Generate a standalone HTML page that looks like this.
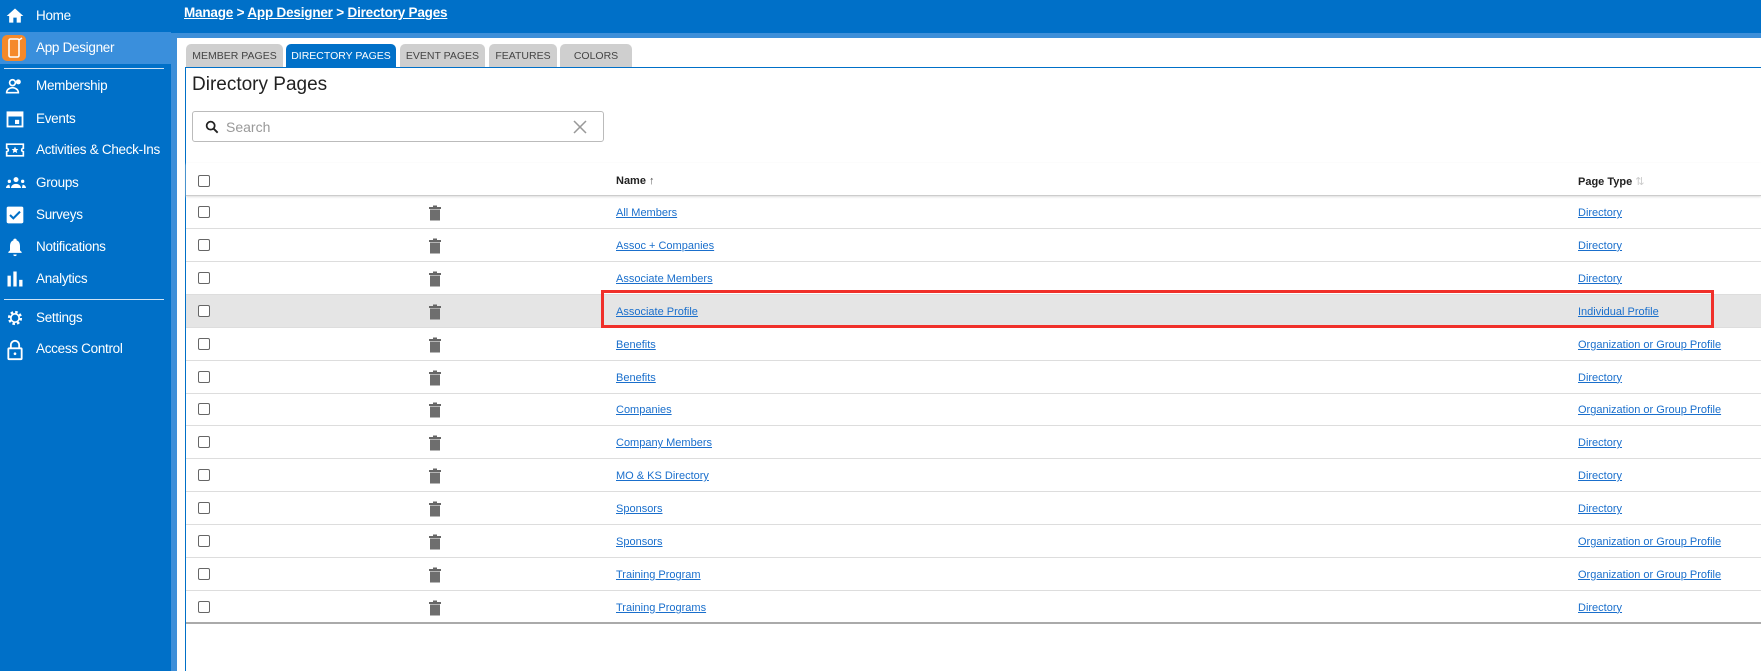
<!DOCTYPE html>
<html style="overflow:hidden;height:671px"><head><style>
*{margin:0;padding:0;box-sizing:border-box}
body{width:1761px;height:671px;overflow:hidden;background:#fff;font-family:"Liberation Sans",sans-serif;position:relative}
.sb{position:absolute;left:0;top:0;width:171px;height:671px;background:#0070c8}
.sbs{position:absolute;left:171px;top:0;width:6px;height:671px;background:#3d8fd9}
.hd{position:absolute;left:171px;top:0;width:1590px;height:33px;background:#0070c8}
.hds{position:absolute;left:177px;top:33px;width:1584px;height:5px;background:#3d8fd9}
.crumb{position:absolute;left:184px;top:5px;color:#fff;font-weight:bold;font-size:13.5px;letter-spacing:-0.2px}
.crumb u{text-decoration:underline}
.it{position:absolute;left:0;width:171px;height:32px;color:#fff;font-size:13.5px;line-height:32px;padding-left:36px;white-space:nowrap;letter-spacing:-0.3px}
.it svg{position:absolute;left:5px;top:6px}
.act{background:#3a8fdc}
.sep{position:absolute;left:4px;width:160px;height:1px;background:#cfe3f5}
.tab{position:absolute;top:44px;height:23px;background:#cfcfcf;color:#444;font-size:10.5px;line-height:24px;text-align:center;border-radius:5px 5px 0 0;white-space:nowrap}
.tab.on{background:#0070c8;color:#fff}
.panel{position:absolute;left:185px;top:67px;width:1576px;height:604px;border-left:1px solid #0070c8;border-top:1px solid #0070c8}
.title{position:absolute;left:192px;top:74px;font-size:19px;color:#222}
.search{position:absolute;left:192px;top:111px;width:412px;height:31px;border:1px solid #bbb;border-radius:3px}
.search span{position:absolute;left:33px;top:7px;color:#999;font-size:14px}
.row{position:absolute;left:186px;width:1575px;height:33px;border-bottom:1px solid #ddd;font-size:11px}
.cb{position:absolute;left:12px;top:10px;width:12px;height:12px;border:1.5px solid #666;border-radius:2px;background:#fff}
.tr{position:absolute;left:242px;top:9px}
.n{position:absolute;left:430px;top:11px;color:#1a6fcc;text-decoration:underline}
.p{position:absolute;left:1392px;top:11px;color:#1a6fcc;text-decoration:underline}
</style></head><body>
<div class="sb"></div><div class="sbs"></div><div class="hd"></div><div class="hds"></div>
<div class="crumb"><u>Manage</u> &gt; <u>App Designer</u> &gt; <u>Directory Pages</u></div>

<div class="it" style="top:0"><svg width="20" height="20" viewBox="0 0 24 24"><path fill="#fff" d="M10 20v-6h4v6h5v-8h3L12 3 2 12h3v8z"/></svg>Home</div>
<div class="it act" style="top:32px"><svg width="24" height="26" viewBox="0 0 24 26" style="top:3px;left:2px"><rect x="0" y="0" width="24" height="26" rx="5" fill="#f5892a"/><rect x="7" y="4" width="10" height="18" rx="1.5" fill="none" stroke="#fff" stroke-width="1.6"/><path d="M17 5l3-2" stroke="#fff" stroke-width="1.5"/></svg>App Designer</div>
<div class="sep" style="top:68px"></div>
<div class="it" style="top:70px"><svg width="20" height="20" viewBox="0 0 24 24"><circle cx="9" cy="8" r="3.5" fill="none" stroke="#fff" stroke-width="2"/><path d="M2 20c0-4 4-6 7-6s7 2 7 6z" fill="none" stroke="#fff" stroke-width="2"/><circle cx="16" cy="7" r="3" fill="#fff"/></svg>Membership</div>
<div class="it" style="top:103px"><svg width="20" height="20" viewBox="0 0 24 24"><rect x="3" y="4" width="18" height="17" fill="none" stroke="#fff" stroke-width="2.2"/><rect x="3" y="4" width="18" height="5" fill="#fff"/><rect x="12" y="13" width="5" height="5" fill="#fff"/></svg>Events</div>
<div class="it" style="top:134px"><svg width="20" height="20" viewBox="0 0 24 24"><path d="M2 5h20v5a2 2 0 000 4v5H2v-5a2 2 0 000-4z" fill="none" stroke="#fff" stroke-width="2"/><path d="M12 8l1.2 2.6 2.8.3-2 1.9.6 2.8-2.6-1.4-2.6 1.4.6-2.8-2-1.9 2.8-.3z" fill="#fff"/></svg>Activities &amp; Check-Ins</div>
<div class="it" style="top:167px"><svg width="22" height="20" viewBox="0 0 24 24"><circle cx="12" cy="8" r="3" fill="#fff"/><circle cx="4" cy="10" r="2" fill="#fff"/><circle cx="20" cy="10" r="2" fill="#fff"/><path d="M6 18c0-3 3-5 6-5s6 2 6 5zM0 18c0-2 2-4 4-4l1 4zM24 18c0-2-2-4-4-4l-1 4z" fill="#fff"/></svg>Groups</div>
<div class="it" style="top:199px"><svg width="20" height="20" viewBox="0 0 24 24"><rect x="2" y="2" width="20" height="20" rx="2" fill="#fff"/><path d="M6 12l4 4 8-8" stroke="#0070c8" stroke-width="2.5" fill="none"/></svg>Surveys</div>
<div class="it" style="top:231px"><svg width="20" height="20" viewBox="0 0 24 24"><path d="M12 2a2 2 0 012 2c3 1 4 4 4 7v5l2 2v1H4v-1l2-2v-5c0-3 1-6 4-7a2 2 0 012-2zM10 21h4a2 2 0 01-4 0z" fill="#fff"/></svg>Notifications</div>
<div class="it" style="top:263px"><svg width="20" height="20" viewBox="0 0 24 24"><rect x="3" y="8" width="4" height="13" fill="#fff"/><rect x="10" y="3" width="4" height="18" fill="#fff"/><rect x="17" y="13" width="4" height="8" fill="#fff"/></svg>Analytics</div>
<div class="sep" style="top:299px"></div>
<div class="it" style="top:302px"><svg width="20" height="20" viewBox="0 0 24 24"><circle cx="12" cy="12" r="7" fill="none" stroke="#fff" stroke-width="3" stroke-dasharray="3 2.5"/><circle cx="12" cy="12" r="5" fill="none" stroke="#fff" stroke-width="2"/></svg>Settings</div>
<div class="it" style="top:333px"><svg width="20" height="22" viewBox="0 0 24 26"><path d="M7 11V7a5 5 0 0110 0v4" fill="none" stroke="#fff" stroke-width="2.2"/><rect x="4" y="11" width="16" height="13" rx="1" fill="none" stroke="#fff" stroke-width="2.2"/><circle cx="12" cy="17.5" r="1.6" fill="#fff"/></svg>Access Control</div>

<div class="tab" style="left:186px;width:97px">MEMBER PAGES</div>
<div class="tab on" style="left:286px;width:110px">DIRECTORY PAGES</div>
<div class="tab" style="left:400px;width:85px">EVENT PAGES</div>
<div class="tab" style="left:489px;width:68px">FEATURES</div>
<div class="tab" style="left:560px;width:72px">COLORS</div>
<div class="panel"></div>
<div class="title">Directory Pages</div>
<div class="search"><svg width="16" height="16" viewBox="0 0 24 24" style="position:absolute;left:11px;top:7px"><circle cx="10" cy="10" r="6" fill="none" stroke="#222" stroke-width="2.6"/><path d="M14.5 14.5l6 6" stroke="#222" stroke-width="2.8"/></svg><span>Search</span><svg width="14" height="14" viewBox="0 0 14 14" style="position:absolute;right:16px;top:8px"><path d="M1 1l12 12M13 1L1 13" stroke="#999" stroke-width="1.5"/></svg></div>

<div class="row" style="top:163px;border-bottom:1px solid #ccc;box-shadow:0 1px 2px #ddd"><div class="cb" style="top:12px"></div><div style="position:absolute;left:430px;top:12px;font-weight:bold;font-size:11px;color:#222">Name <span style="font-weight:normal;color:#555">&#8593;</span></div><div style="position:absolute;left:1392px;top:12px;font-weight:bold;font-size:11px;color:#222">Page Type <span style="font-weight:normal;color:#ccc">&#8645;</span></div></div>

<div id="rows"></div>
<script>
var d=[["All Members","Directory"],["Assoc + Companies","Directory"],["Associate Members","Directory"],["Associate Profile","Individual Profile"],["Benefits","Organization or Group Profile"],["Benefits","Directory"],["Companies","Organization or Group Profile"],["Company Members","Directory"],["MO &amp; KS Directory","Directory"],["Sponsors","Directory"],["Sponsors","Organization or Group Profile"],["Training Program","Organization or Group Profile"],["Training Programs","Directory"]];
var h="";d.forEach(function(r,i){var t=196+i*32.9;h+='<div class="row" style="top:'+t+'px;'+(i==3?'background:#e5e5e5;':'')+(i==12?'border-bottom:2px solid #aaa;':'')+'"><div class="cb"></div><svg class="tr" width="14" height="16" viewBox="0 0 14 16"><rect x="1" y="2" width="12" height="2" fill="#666"/><rect x="5" y="0.5" width="4" height="2" fill="#666"/><rect x="2" y="4.5" width="10" height="11" fill="#6e6e6e"/></svg><div class="n">'+r[0]+'</div><div class="p">'+r[1]+'</div></div>';});
document.getElementById("rows").innerHTML=h;
</script>
<div style="position:absolute;left:601px;top:290px;width:1113px;height:38px;border:3px solid #f0302a"></div>
</body></html>
